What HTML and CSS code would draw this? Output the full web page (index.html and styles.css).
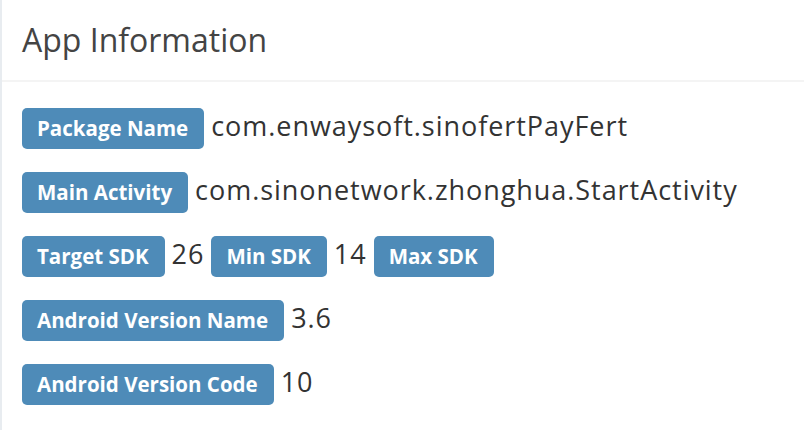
FILE: index.html
```html
<!DOCTYPE html>
<html>
<head>
<meta charset="utf-8">
<link rel="stylesheet" href="styles.css">
</head>
<body>
<div class="box">
  <div class="box-header">
    <h3 class="box-title">App Information</h3>
  </div>
  <div class="box-body">
    <div class="row"><span class="label">Package Name</span> <span class="val">com.enwaysoft.sinofertPayFert</span></div>
    <div class="row"><span class="label">Main Activity</span> <span class="val">com.sinonetwork.zhonghua.StartActivity</span></div>
    <div class="row"><span class="label">Target SDK</span> <span class="val">26</span> <span class="label">Min SDK</span> <span class="val">14</span> <span class="label">Max SDK</span></div>
    <div class="row"><span class="label">Android Version Name</span> <span class="val">3.6</span></div>
    <div class="row"><span class="label">Android Version Code</span> <span class="val">10</span></div>
  </div>
</div>
</body>
</html>
```
FILE: styles.css
```css
html, body {
  margin: 0;
  padding: 0;
  background: #fff;
}
body {
  font-family: "Open Sans", "Noto Sans", sans-serif;
  color: #333;
}
.box {
  border-left: 2px solid #e8ecf0;
  height: 430px;
  box-sizing: border-box;
}
.box-header {
  height: 80px;
  border-bottom: 2px solid #f4f4f4;
  padding-left: 20px;
  display: flex;
  align-items: center;
}
.box-title {
  margin: 0;
  font-weight: 400;
  font-size: 32px;
  line-height: 1;
  color: #444;
}
.box-body {
  padding: 23px 20px 0 20px;
}
.row {
  height: 64px;
  white-space: nowrap;
  font-size: 27px;
  line-height: 41px;
}
.label {
  display: inline-block;
  background: #4e8bb8;
  color: #fff;
  font-weight: 700;
  font-size: 20.5px;
  height: 41px;
  line-height: 41px;
  padding: 0 16px 0 15px;
  border-radius: 5px;
  box-sizing: border-box;
  letter-spacing: 0;
}
.val {
  display: inline-block;
  letter-spacing: 0.95px;
}
```
